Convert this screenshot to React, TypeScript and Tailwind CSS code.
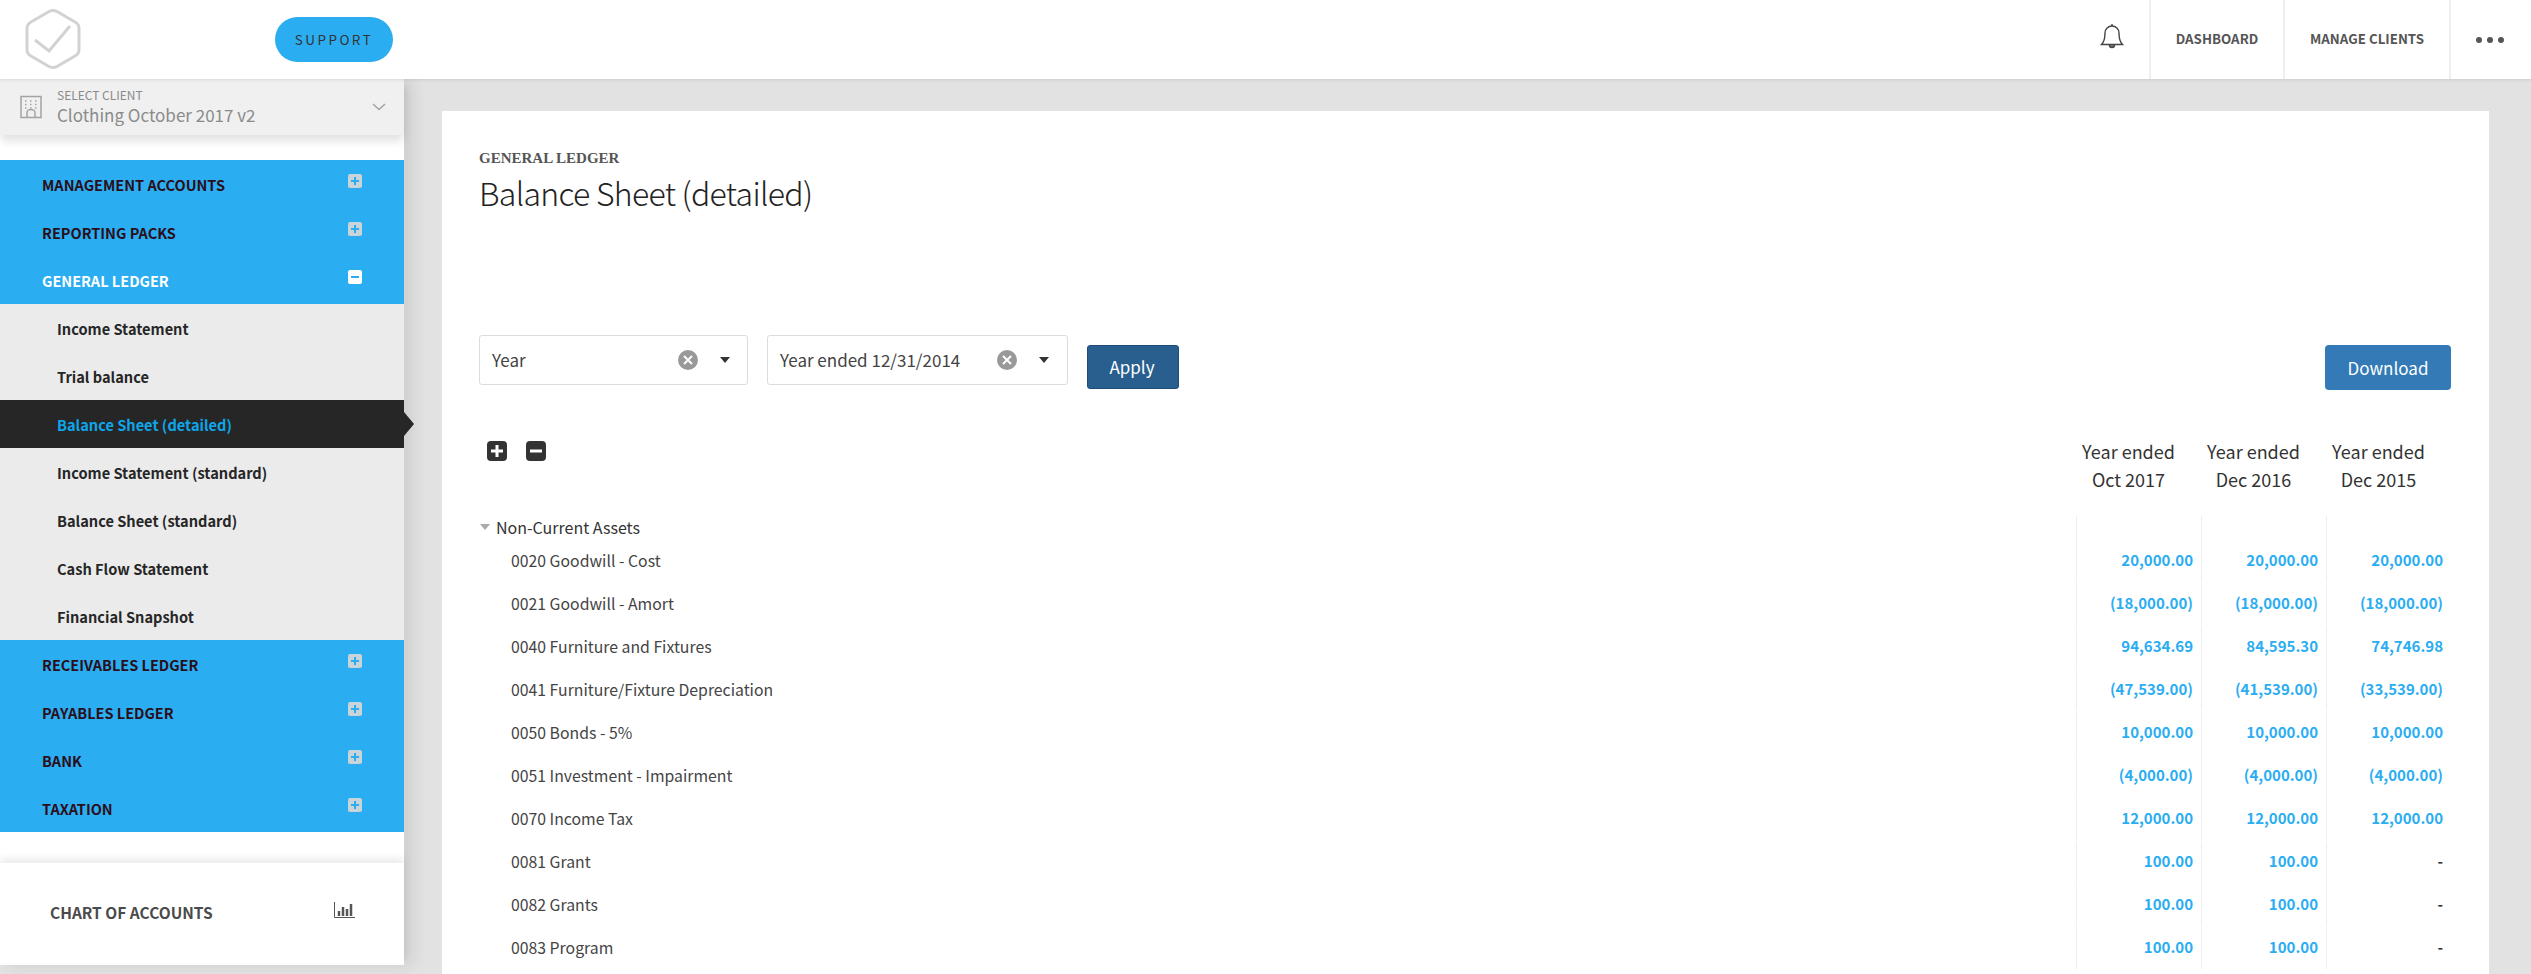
const font = "font-['Noto_Sans_CJK_SC','Source_Sans_Pro','Noto_Sans',sans-serif]";

const subItems = [
  "Income Statement",
  "Trial balance",
  "Balance Sheet (detailed)",
  "Income Statement (standard)",
  "Balance Sheet (standard)",
  "Cash Flow Statement",
  "Financial Snapshot",
];

const rows = [
  ["0020 Goodwill - Cost", "20,000.00", "20,000.00", "20,000.00"],
  ["0021 Goodwill - Amort", "(18,000.00)", "(18,000.00)", "(18,000.00)"],
  ["0040 Furniture and Fixtures", "94,634.69", "84,595.30", "74,746.98"],
  ["0041 Furniture/Fixture Depreciation", "(47,539.00)", "(41,539.00)", "(33,539.00)"],
  ["0050 Bonds - 5%", "10,000.00", "10,000.00", "10,000.00"],
  ["0051 Investment - Impairment", "(4,000.00)", "(4,000.00)", "(4,000.00)"],
  ["0070 Income Tax", "12,000.00", "12,000.00", "12,000.00"],
  ["0081 Grant", "100.00", "100.00", "-"],
  ["0082 Grants", "100.00", "100.00", "-"],
  ["0083 Program", "100.00", "100.00", "-"],
];

function Logo() {
  return (
    <svg width="56" height="62" viewBox="0 0 56 62" fill="none" stroke="#d2d2d2">
      <path d="M24 3.500 Q28 1.500 32 3.500 L50 14 Q54 16 54 20.500 V41.500 Q54 46 50 48 L32 58.500 Q28 60.500 24 58.500 L6 48 Q2 46 2 41.500 V20.500 Q2 16 6 14 Z" strokeWidth="3" />
      <path d="M10 32 L24 43 L45 18" strokeWidth="3" />
    </svg>
  );
}

function Building() {
  return (
    <svg width="22" height="24" viewBox="0 0 22 24" fill="none" stroke="#a3a3a3">
      <rect x="1" y="1.500" width="20" height="21" strokeWidth="1.500" />
      <path d="M5 6h2M10 6h2M15 6h2M5 9.500h2M10 9.500h2M15 9.500h2M5 13h2M10 13h2M15 13h2" strokeWidth="1.500" strokeDasharray="1.500 1" />
      <path d="M7 22v-4.500a4 3 0 0 1 8 0V22" strokeWidth="1.500" />
    </svg>
  );
}

function PlusBox({ minus }: { minus?: boolean }) {
  return (
    <span className={`flex h-[14px] w-[14px] items-center justify-center rounded-[2px] ${minus ? "bg-white" : "bg-[#c9d3da]"}`}>
      <svg width="10" height="10" viewBox="0 0 10 10" stroke="#2badf2" strokeWidth="2">
        <path d="M1 5h8" />
        {!minus && <path d="M5 1v8" />}
      </svg>
    </span>
  );
}

function BellIcon() {
  return (
    <svg width="24" height="26" viewBox="0 0 24 26" fill="none" stroke="#444" strokeWidth="1.400">
      <path d="M12 3a7 7 0 0 0-7 7c0 6-1 9-3.500 11.500h21C20 19 19 16 19 10a7 7 0 0 0-7-7z" />
      <path d="M12 3V1" />
      <path d="M9.500 22a2.500 2.500 0 0 0 5 0" fill="#777" />
    </svg>
  );
}

function NavItem({ label, open }: { label: string; open?: boolean }) {
  return (
    <div className={`flex h-12 items-center justify-between pl-[42px] pr-[42px] text-[14.5px] font-bold ${open ? "text-white" : "text-[#2a0f1a]"}`}>
      <span className="pt-[1px] leading-5">{label}</span>
      <span className="-mt-[6px]"><PlusBox minus={open} /></span>
    </div>
  );
}

function Sidebar() {
  return (
    <aside className="relative z-10 flex h-[886px] w-[404px] shrink-0 flex-col bg-white shadow-[8px_0_16px_rgba(0,0,0,0.09)]">
      <div className="flex h-[56px] items-center rounded-b-md bg-[#f0f0f0] pl-[20px] pr-[18px] shadow-[0_6px_10px_rgba(0,0,0,0.12)]">
        <Building />
        <div className="ml-[15px] flex-1 text-[#8a8a8a]">
          <div className="text-[12px] leading-[13px]">SELECT CLIENT</div>
          <div className="mt-[3px] text-[17px] leading-[22px]">Clothing October 2017 v2</div>
        </div>
        <svg width="14" height="8" viewBox="0 0 14 8" fill="none" stroke="#a3a3a3" strokeWidth="1.500">
          <path d="M1 1l6 5.500L13 1" />
        </svg>
      </div>
      <div className="mt-[25px] bg-[#2badf2]">
        <NavItem label="MANAGEMENT ACCOUNTS" />
        <NavItem label="REPORTING PACKS" />
        <NavItem label="GENERAL LEDGER" open />
      </div>
      <div className="bg-[#ebebeb]">
        {subItems.map((item) =>
          item === "Balance Sheet (detailed)" ? (
            <div key={item} className="relative flex h-12 items-center bg-[#262626] pl-[57px] pt-[1px] text-[14.6px] font-bold text-[#0ea5e9]">
              {item}
              <span className="absolute left-full top-[12px] border-y-[12px] border-l-[10px] border-y-transparent border-l-[#262626]" />
            </div>
          ) : (
            <div key={item} className="flex h-12 items-center pl-[57px] pt-[1px] text-[14.6px] font-bold text-[#262626]">{item}</div>
          ),
        )}
      </div>
      <div className="bg-[#2badf2]">
        <NavItem label="RECEIVABLES LEDGER" />
        <NavItem label="PAYABLES LEDGER" />
        <NavItem label="BANK" />
        <NavItem label="TAXATION" />
      </div>
      <div className="mt-[31px] flex h-[100px] items-center justify-between pl-[50px] pr-[49px] text-[15.5px] font-semibold text-[#4a4a4a] shadow-[0_-4px_8px_rgba(0,0,0,0.09)]">
        <span>CHART OF ACCOUNTS</span>
        <svg className="-mt-[7px]" width="21" height="16" viewBox="0 0 21 16" fill="none" stroke="#555">
          <path d="M.5 0v15.500H21" />
          <path d="M5 14V9M9 14V5M13 14V7M17 14V2" strokeWidth="2.500" />
        </svg>
      </div>
    </aside>
  );
}

function Filter({ label, width, gap }: { label: string; width: string; gap: string }) {
  return (
    <div className={`flex h-[50px] items-center rounded-[3px] border border-[#dcdcdc] pl-[12px] pr-[14px] text-[17px] text-[#444] ${width}`}>
      <span className={`shrink-0 ${gap}`}>{label}</span>
      <span className="flex h-5 w-5 shrink-0 items-center justify-center rounded-full bg-[#999]">
        <svg width="10" height="10" viewBox="0 0 10 10" stroke="white" strokeWidth="2"><path d="M1 1l8 8M9 1l-8 8" /></svg>
      </span>
      <span className="ml-[22px] border-x-[5.500px] border-t-[6px] border-x-transparent border-t-[#333]" />
    </div>
  );
}

function TableRow({ cells }: { cells: string[] }) {
  return (
    <div className="mb-px flex h-[42px] items-center">
      <div className="flex-1 pb-[1px] pl-[32px] text-[15.8px] leading-6 text-[#444]">{cells[0]}</div>
      {cells.slice(1).map((v, i) => (
        <div
          key={i}
          className={`flex h-full w-[125px] items-center justify-end border-l border-[#eeeeee] pb-[1px] pr-[8px] text-[15px] font-semibold ${v === "-" ? "text-[#333]" : "text-[#2badf2]"}`}
        >
          {v}
        </div>
      ))}
    </div>
  );
}

export default function App() {
  return (
    <div className={`h-[974px] overflow-hidden bg-[#e2e2e2] ${font}`}>
      <header className="relative z-20 flex h-[79px] items-center bg-white shadow-[0_1px_3px_rgba(0,0,0,0.1)]">
        <div className="ml-[25px] -mt-[2px]"><Logo /></div>
        <button className="ml-[194px] h-[45px] w-[118px] rounded-full bg-[#2badf2] text-[13.5px] tracking-[0.18em] text-[#333]">SUPPORT</button>
        <div className="ml-auto flex h-full items-stretch text-[13.3px] font-semibold text-[#555]">
          <div className="flex w-[65px] items-center justify-start pb-[8px] pl-[16px]"><BellIcon /></div>
          <div className="flex w-[134px] items-center justify-center border-l-2 border-[#efefef] pb-[2px]">DASHBOARD</div>
          <div className="flex w-[166px] items-center justify-center border-l-2 border-[#efefef] pb-[2px]">MANAGE CLIENTS</div>
          <div className="flex w-[82px] items-center justify-center gap-[5px] border-l-2 border-[#efefef] pr-[3px]">
            <span className="h-[6px] w-[6px] rounded-full bg-[#555]" />
            <span className="h-[6px] w-[6px] rounded-full bg-[#555]" />
            <span className="h-[6px] w-[6px] rounded-full bg-[#555]" />
          </div>
        </div>
      </header>
      <div className="flex">
        <Sidebar />
        <main className="ml-[38px] mr-[42px] mt-[32px] h-[900px] flex-1 bg-white pl-[37px] pr-[38px] pt-[38px]">
          <div className="font-['Liberation_Serif',serif] text-[15px] font-bold leading-[18px] text-[#555]">GENERAL LEDGER</div>
          <h1 className="mt-[3px] text-[32px] font-light leading-[44px] tracking-[-0.7px] text-[#222]">Balance Sheet (detailed)</h1>
          <div className="mt-[121px] flex items-start">
            <Filter label="Year" width="w-[269px]" gap="w-[186px]" />
            <div className="ml-[19px]">
              <Filter label="Year ended 12/31/2014" width="w-[301px]" gap="w-[217px]" />
            </div>
            <button className="ml-[19px] mt-[10px] h-[44px] w-[92px] rounded-[3px] border border-[#1f4c78] bg-[#285f8f] pr-[2px] text-[17px] text-white">Apply</button>
            <button className="ml-auto mt-[10px] h-[45px] w-[126px] rounded-[4px] bg-[#337ab7] text-[17px] text-white">Download</button>
          </div>
          <div className="mt-[45px] flex h-[81px] items-start text-[18px] leading-[28px] text-[#333]">
            <div className="flex flex-1 gap-[19px] pl-[8px] pt-[6px]">
              <span className="flex h-[20px] w-[20px] items-center justify-center rounded-[4px] bg-[#333]">
                <svg width="14" height="14" viewBox="0 0 14 14" stroke="white" strokeWidth="3"><path d="M1 7h12M7 1v12" /></svg>
              </span>
              <span className="flex h-[20px] w-[20px] items-center justify-center rounded-[4px] bg-[#333]">
                <svg width="14" height="14" viewBox="0 0 14 14" stroke="white" strokeWidth="3"><path d="M1 7h12" /></svg>
              </span>
            </div>
            <div className="mt-[2px] w-[125px] pr-[20px] text-center">Year ended<br />Oct 2017</div>
            <div className="mt-[2px] w-[125px] pr-[20px] text-center">Year ended<br />Dec 2016</div>
            <div className="mt-[2px] w-[125px] pr-[20px] text-center">Year ended<br />Dec 2015</div>
          </div>
          <div className="flex h-[24px] items-center">
            <div className="flex flex-1 items-center pb-[2px] pl-[1px] text-[16px] text-[#333]">
              <span className="border-x-[5.500px] border-t-[6px] border-x-transparent border-t-[#aaa]" />
              <span className="ml-[6px]">Non-Current Assets</span>
            </div>
            <div className="h-full w-[125px] border-l border-[#eeeeee]" />
            <div className="h-full w-[125px] border-l border-[#eeeeee]" />
            <div className="h-full w-[125px] border-l border-[#eeeeee]" />
          </div>
          {rows.map((r) => (
            <TableRow key={r[0]} cells={r} />
          ))}
        </main>
      </div>
    </div>
  );
}
